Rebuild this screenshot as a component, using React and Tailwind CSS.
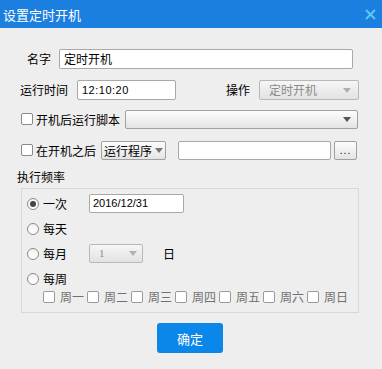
import React from "react";

const cjk = { fontFamily: '"Noto Sans CJK SC", "Microsoft YaHei", sans-serif' };
const lat = { fontFamily: '"Liberation Sans", Arial, sans-serif' };

function Checkbox({ gray }) {
  return (
    <span
      className={`inline-block w-[12px] h-[12px] rounded-[2px] border bg-white shrink-0 ${
        gray ? "border-[#9a9a9a]" : "border-[#8a8a8a]"
      }`}
    />
  );
}

function Radio({ checked }) {
  return (
    <span className="flex items-center justify-center w-[12px] h-[12px] rounded-full border border-[#8a8a8a] bg-gradient-to-b from-[#f2f2f2] to-[#ffffff] shrink-0">
      {checked && <span className="block w-[6px] h-[6px] rounded-full bg-[#444]" />}
    </span>
  );
}

function Arrow({ color }) {
  return (
    <svg width="8" height="5" viewBox="0 0 8 5" className="shrink-0">
      <path d="M0 0 L8 0 L4 5 Z" fill={color} />
    </svg>
  );
}

export default function App() {
  return (
    <div className="w-[382px] h-[369px] bg-[#eeeeee] flex flex-col text-[12px] text-black whitespace-nowrap" style={cjk}>
      {/* title bar */}
      <div className="h-[28px] bg-[#1a7fdf] flex items-center justify-between pl-[3px] pr-[6px]">
        <span className="text-white text-[13px] leading-none">设置定时开机</span>
        <svg width="11" height="11" viewBox="0 0 11 11">
          <path d="M1 1 L10 10 M10 1 L1 10" stroke="#5cc8f2" strokeWidth="2" />
        </svg>
      </div>

      {/* name */}
      <div className="mt-[21px] h-[20px] flex items-center">
        <span className="ml-[27px] w-[24px] leading-none">名字</span>
        <div className="ml-[8px] w-[294px] h-[20px] bg-white border border-[#a8a8a8] rounded-[2px] flex items-center pl-[4px] leading-none">
          定时开机
        </div>
      </div>

      {/* time + action */}
      <div className="mt-[11px] h-[20px] flex items-center">
        <span className="ml-[20px] w-[48px] leading-none">运行时间</span>
        <div className="ml-[9px] w-[99px] h-[20px] bg-white border border-[#a8a8a8] rounded-[2px] flex items-center pl-[4px] text-[11px] leading-none tracking-[0.5px]" style={lat}>
          12:10:20
        </div>
        <span className="ml-[50px] w-[24px] leading-none">操作</span>
        <div className="ml-[9px] w-[100px] h-[20px] border border-[#b8b8b8] rounded-[2px] bg-gradient-to-b from-[#f6f6f6] to-[#e2e2e2] flex items-center justify-between pl-[9px] pr-[7px]">
          <span className="text-[#8a8a8a] leading-none">定时开机</span>
          <Arrow color="#b0b0b0" />
        </div>
      </div>

      {/* script */}
      <div className="mt-[10px] h-[19px] flex items-center">
        <span className="ml-[21px]"><Checkbox /></span>
        <span className="ml-[3px] w-[84px] leading-none">开机后运行脚本</span>
        <div className="ml-[5px] w-[233px] h-[19px] border border-[#a0a0a0] rounded-[2px] bg-gradient-to-b from-[#fdfdfd] to-[#e4e4e4] flex items-center justify-end pr-[6px]">
          <Arrow color="#555" />
        </div>
      </div>

      {/* after boot */}
      <div className="mt-[12px] h-[19px] flex items-center">
        <span className="ml-[21px]"><Checkbox /></span>
        <span className="ml-[3px] w-[60px] leading-none">在开机之后</span>
        <div className="ml-[5px] w-[65px] h-[19px] border border-[#a0a0a0] rounded-[2px] bg-gradient-to-b from-[#fdfdfd] to-[#e4e4e4] flex items-center justify-center gap-[3px]">
          <span className="leading-none">运行程序</span>
          <Arrow color="#777" />
        </div>
        <div className="ml-[12px] w-[153px] h-[19px] bg-white border border-[#a8a8a8] rounded-[2px]" />
        <div className="ml-[3px] w-[23px] h-[19px] border border-[#a0a0a0] rounded-[2px] bg-gradient-to-b from-[#fdfdfd] to-[#e4e4e4] flex items-center justify-center text-[10px] leading-none tracking-[1px]" style={lat}>
          ...
        </div>
      </div>

      {/* frequency label */}
      <div className="mt-[10px] h-[14px] flex items-center">
        <span className="ml-[17px] leading-none">执行频率</span>
      </div>

      {/* group box */}
      <div className="mt-[4px] ml-[21px] w-[338px] h-[125px] border border-[#d8d8d8] flex flex-col">
        <div className="mt-[5px] h-[19px] flex items-center">
          <span className="ml-[5px]"><Radio checked /></span>
          <span className="ml-[4px] w-[24px] leading-none">一次</span>
          <div className="ml-[22px] w-[95px] h-[19px] bg-white border border-[#a8a8a8] rounded-[2px] flex items-center pl-[3px] text-[11px] leading-none" style={lat}>
            2016/12/31
          </div>
        </div>
        <div className="mt-[9px] h-[14px] flex items-center">
          <span className="ml-[5px]"><Radio /></span>
          <span className="ml-[4px] leading-none">每天</span>
        </div>
        <div className="mt-[8px] h-[19px] flex items-center">
          <span className="ml-[5px]"><Radio /></span>
          <span className="ml-[4px] w-[24px] leading-none">每月</span>
          <div className="ml-[22px] w-[54px] h-[19px] border border-[#b8b8b8] rounded-[2px] bg-gradient-to-b from-[#f6f6f6] to-[#e2e2e2] flex items-center justify-between pl-[9px] pr-[5px]">
            <span className="text-[#8a8a8a] text-[11px] leading-none" style={{ fontFamily: '"Liberation Serif", serif' }}>1</span>
            <Arrow color="#b0b0b0" />
          </div>
          <span className="ml-[20px] leading-none">日</span>
        </div>
        <div className="mt-[9px] h-[14px] flex items-center">
          <span className="ml-[5px]"><Radio /></span>
          <span className="ml-[4px] leading-none">每周</span>
        </div>
        <div className="mt-[4px] h-[14px] flex items-center pl-[21px] gap-[3px]">
          {["周一", "周二", "周三", "周四", "周五", "周六", "周日"].map((d) => (
            <div key={d} className="flex items-center w-[41px] gap-[5px] shrink-0">
              <Checkbox gray />
              <span className="text-[#707070] leading-none whitespace-nowrap">{d}</span>
            </div>
          ))}
        </div>
      </div>

      {/* ok button */}
      <div className="mt-[10px] flex">
        <div className="ml-[157px] w-[66px] h-[30px] rounded-[3px] bg-[#0a87e8] text-white text-[13px] flex items-center justify-center leading-none">
          确定
        </div>
      </div>
    </div>
  );
}
